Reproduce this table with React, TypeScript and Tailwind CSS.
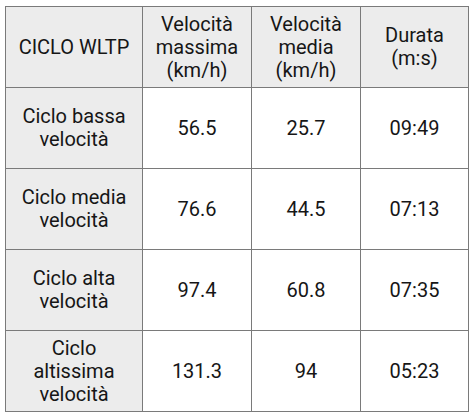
const header = ['CICLO WLTP', 'Velocità\nmassima\n(km/h)', 'Velocità\nmedia\n(km/h)', 'Durata\n(m:s)'];

const rows = [
  ['Ciclo bassa\nvelocità', '56.5', '25.7', '09:49'],
  ['Ciclo media\nvelocità', '76.6', '44.5', '07:13'],
  ['Ciclo alta\nvelocità', '97.4', '60.8', '07:35'],
  ['Ciclo\naltissima\nvelocità', '131.3', '94', '05:23'],
];

const widths = ['w-[137px]', 'w-[109px]', 'w-[109px]', 'w-[108px]'];

export default function App() {
  return (
    <div className="w-[474px] h-[416px] bg-white pl-[5px] pt-[6px]" style={{ fontFamily: 'Roboto, "Liberation Sans", sans-serif' }}>
      <table className="border-collapse border border-[#a0a0a0] text-[20px] leading-[23px] text-[#161616]">
        <thead>
          <tr className="h-[81px] bg-[#ececec]">
            {header.map((h, i) => (
              <th key={i} className={`${widths[i]} border border-[#7a7a7a] font-normal text-center whitespace-pre-line align-middle`}>
                {h}
              </th>
            ))}
          </tr>
        </thead>
        <tbody>
          {rows.map((r, ri) => (
            <tr key={ri} className="h-[81px]">
              {r.map((c, ci) => (
                <td
                  key={ci}
                  className={`border border-[#7a7a7a] text-center whitespace-pre-line align-middle ${ci === 0 ? 'bg-[#ececec]' : 'bg-white'}`}
                >
                  {c}
                </td>
              ))}
            </tr>
          ))}
        </tbody>
      </table>
    </div>
  );
}
